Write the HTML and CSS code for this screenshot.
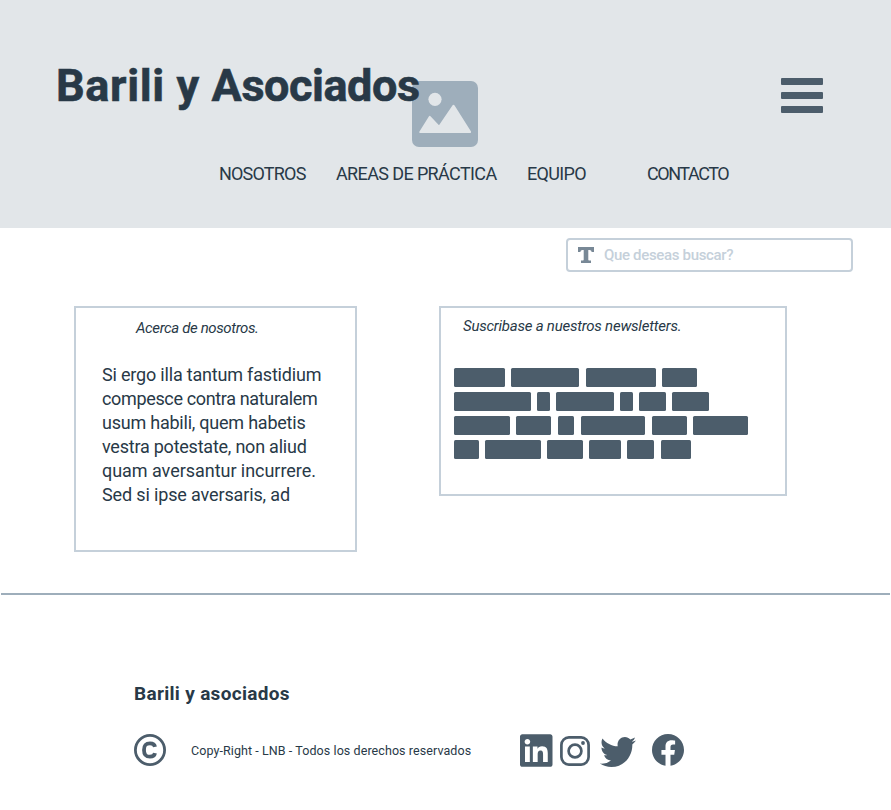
FILE: index.html
```html
<!DOCTYPE html>
<html lang="es">
<head>
<meta charset="utf-8">
<title>Barili y Asociados</title>
<link rel="stylesheet" href="styles.css">
</head>
<body>
<header class="header">
  <div class="brand-row">
    <h1 class="brand"><span class="brand-first">Barili y </span><span class="brand-last">Asociados</span></h1>
    <svg class="picture" viewBox="0 0 66 66">
      <rect width="66" height="66" rx="7" fill="#9eaebb"/>
      <circle cx="23" cy="18.300" r="6.600" fill="#e2e6e9"/>
      <path d="M7.300 50.800 17 35.200q.7-1 1.500 0L27 44.200 40.400 24.500q1.100-1.400 2.200 0L59 50.600q.5 1.500-1 1.500H8.300q-1.500 0-1-1.300z" fill="#e2e6e9"/>
    </svg>
    <div class="menu"><span></span><span></span><span></span></div>
  </div>
  <nav class="nav">
    <a class="n1">NOSOTROS</a><a class="n2">AREAS DE PRÁCTICA</a><a class="n3">EQUIPO</a><a class="n4">CONTACTO</a>
  </nav>
</header>
<div class="search">
  <svg class="search-icon" viewBox="0 0 16 16"><path d="M0 0h16v5h-2.300q-.2-2-2.200-2h-1.200v9.800q0 .7.7.7h2V16H3v-2.500h2q.7 0 .7-.7V3H4.500q-2 0-2.200 2H0z" fill="#788896"/></svg>
  <span class="search-text">Que deseas buscar?</span>
</div>
<main class="cards">
  <section class="card about">
    <h2 class="card-title about-title">Acerca de nosotros.</h2>
    <p class="copy"><span class="l1">Si ergo illa tantum fastidium</span><br><span class="l2">compesce contra naturalem</span><br><span class="l3">usum habili, quem habetis</span><br><span class="l4">vestra potestate, non aliud</span><br><span class="l5">quam aversantur incurrere.</span><br><span class="l6">Sed si ipse aversaris, ad</span></p>
  </section>
  <section class="card news">
    <h2 class="card-title news-title">Suscribase a nuestros newsletters.</h2>
    <div class="blocks">
      <div class="block-row"><i style="width:51px"></i><i style="width:68px"></i><i style="width:70.3px"></i><i style="width:34.500px"></i></div>
      <div class="block-row"><i style="width:76.500px"></i><i style="width:13px"></i><i style="width:57.700px"></i><i style="width:12.800px"></i><i style="width:27px"></i><i style="width:37px"></i></div>
      <div class="block-row"><i style="width:56px"></i><i style="width:35px"></i><i style="width:16.700px"></i><i style="width:64.700px"></i><i style="width:35px"></i><i style="width:55.500px"></i></div>
      <div class="block-row"><i style="width:24.700px"></i><i style="width:55.800px"></i><i style="width:36px"></i><i style="width:31.800px"></i><i style="width:26.800px"></i><i style="width:30.600px"></i></div>
    </div>
  </section>
</main>
<footer class="footer">
  <h3 class="footer-title">Barili y asociados</h3>
  <div class="footer-row">
    <svg class="copyright" viewBox="0 0 32 32" fill="none" stroke="#4c5d6b"><circle cx="16" cy="16" r="14.600" stroke-width="2.800"/><path d="M21 12.800C20.600 10.600 19 9.300 16 9.300C12 9.300 10 11 10 16S12 22.700 16 22.700C19 22.700 20.600 21.400 21 19.200" stroke-width="3.800"/></svg>
    <span class="legal">Copy-Right - LNB - Todos los derechos reservados</span>
    <div class="social">
      <svg class="linkedin" viewBox="0 32 448 448"><path d="M416 32H31.900C14.300 32 0 46.500 0 64.300v383.400C0 465.500 14.300 480 31.900 480H416c17.600 0 32-14.500 32-32.300V64.300c0-17.800-14.400-32.300-32-32.300zM135.400 416H69V202.200h66.500V416zm-33.200-243c-21.300 0-38.500-17.300-38.500-38.500S80.900 96 102.200 96c21.200 0 38.500 17.300 38.500 38.500 0 21.300-17.200 38.500-38.500 38.500zm282.100 243h-66.400V312c0-24.800-.5-56.700-34.500-56.700-34.600 0-39.900 27-39.900 54.900V416h-66.400V202.200h63.700v29.200h.9c8.900-16.800 30.600-34.500 62.200-34.500 66.500 0 78.800 43.800 78.800 100.900V416z"/></svg>
      <svg class="instagram" viewBox="0 0 30 30"><rect x="1.400" y="1.400" width="27.200" height="27.200" rx="7.500" fill="none" stroke="#4c5d6b" stroke-width="2.700"/><circle cx="15" cy="15" r="6.400" fill="none" stroke="#4c5d6b" stroke-width="2.700"/><circle cx="23" cy="7" r="1.900"/></svg>
      <svg class="twitter" viewBox="0 48 512 416" preserveAspectRatio="none"><path d="M459.370 151.716c.325 4.548.325 9.097.325 13.645 0 138.720-105.583 298.558-298.558 298.558-59.452 0-114.680-17.219-161.137-47.106 8.447.974 16.568 1.299 25.340 1.299 49.055 0 94.213-16.568 130.274-44.832-46.132-.975-84.792-31.188-98.112-72.772 6.498.974 12.995 1.624 19.818 1.624 9.421 0 18.843-1.300 27.614-3.573-48.081-9.747-84.143-51.980-84.143-102.985v-1.299c13.969 7.797 30.214 12.670 47.431 13.319-28.264-18.843-46.781-51.005-46.781-87.391 0-19.492 5.197-37.360 14.294-52.954 51.655 63.675 129.300 105.258 216.365 109.807-1.624-7.797-2.599-15.918-2.599-24.040 0-57.828 46.782-104.934 104.934-104.934 30.213 0 57.502 12.670 76.670 33.137 23.715-4.548 46.456-13.320 66.599-25.340-7.798 24.366-24.366 44.833-46.132 57.827 21.117-2.273 41.584-8.122 60.426-16.243-14.292 20.791-32.161 39.308-52.628 54.253z"/></svg>
      <svg class="facebook" viewBox="8 8 496 496"><path d="M504 256C504 119 393 8 256 8S8 119 8 256c0 123.780 90.690 226.380 209.250 245V327.690h-63V256h63v-54.640c0-62.150 37-96.480 93.670-96.480 27.140 0 55.520 4.840 55.520 4.840v61h-31.280c-30.800 0-40.410 19.120-40.410 38.730V256h68.780l-11 71.690h-57.780V501C413.310 482.380 504 379.780 504 256z"/></svg>
    </div>
  </div>
</footer>
</body>
</html>
```
FILE: styles.css
```css
* { box-sizing: border-box; }
body { margin: 0; background: #fff; color: #283947; font-family: Roboto, sans-serif; }
h1, h2, h3, p { margin: 0; }
svg { display: block; flex: none; }
.header { height: 228px; background: #e2e6e9; padding-top: 60px; }
.brand-row { display: flex; align-items: flex-start; height: 102px; padding-left: 56px; }
.brand { width: 370px; margin-right: -14px; font-size: 45px; line-height: 52px; font-weight: 700; white-space: nowrap; position: relative; z-index: 1; -webkit-text-stroke: 0.6px #283947; }
.brand-first { letter-spacing: 0.620px; }
.brand-last { letter-spacing: -0.450px; }
.picture { width: 66px; height: 66px; margin-top: 21px; }
.menu { display: flex; flex-direction: column; gap: 7px; margin: 17.500px 0 0 303px; }
.menu span { width: 41.500px; height: 7px; border-radius: 1px; background: #4c5d6b; }
.nav { display: flex; padding-left: 219px; font-size: 18px; line-height: 24px; font-weight: 450; white-space: nowrap; }
.n1 { width: 117px; letter-spacing: -0.800px; }
.n2 { width: 191px; letter-spacing: -0.620px; }
.n3 { width: 120px; letter-spacing: -0.680px; }
.n4 { letter-spacing: -1.450px; }
.search { display: flex; align-items: center; width: 287px; height: 34px; margin: 10px 0 0 566px; padding-left: 10px; border: 2px solid #c5d0da; border-radius: 4px; }
.search-icon { width: 16px; height: 16px; }
.search-text { margin-left: 10px; font-size: 15px; line-height: 20px; font-weight: 500; letter-spacing: -0.330px; color: #c5d0da; }
.cards { display: flex; align-items: flex-start; gap: 82px; height: 321px; padding: 34px 0 0 74px; }
.card { border: 2px solid #c5d0da; }
.about { width: 283px; height: 245.500px; padding: 10px 0 0 26px; }
.news { width: 348px; height: 189.500px; padding: 8px 0 0 13px; }
.card-title { font-size: 15px; line-height: 20px; font-weight: 450; font-style: italic; white-space: nowrap; }
.about-title { margin-left: 34px; letter-spacing: -0.380px; }
.news-title { margin-left: 9px; letter-spacing: -0.230px; }
.copy { margin-top: 25px; font-size: 18px; line-height: 24px; font-weight: 450; white-space: nowrap; }
.l1 { letter-spacing: -0.190px; }
.l2 { letter-spacing: -0.350px; }
.l3 { letter-spacing: -0.230px; }
.l4 { letter-spacing: -0.230px; }
.l5 { letter-spacing: -0.040px; }
.l6 { letter-spacing: -0.140px; }
.blocks { display: flex; flex-direction: column; gap: 5px; margin-top: 32px; }
.block-row { display: flex; gap: 6.300px; height: 19px; }
.block-row i { background: #4c5d6b; border-radius: 1.500px; }
.footer { margin: 0 1px; border-top: 2px solid #9eaebb; padding: 87px 0 0 133px; }
.footer-title { font-size: 19px; line-height: 24px; font-weight: 700; letter-spacing: 0.310px; }
.footer-row { display: flex; align-items: flex-start; margin-top: 28px; }
.copyright { width: 32px; height: 32px; }
.legal { width: 304px; margin: 9px 0 0 25px; font-size: 12.500px; line-height: 16px; font-weight: 450; letter-spacing: 0.080px; white-space: nowrap; }
.social { display: flex; margin-left: 25px; fill: #4c5d6b; }
.linkedin { width: 32.500px; height: 33px; }
.instagram { width: 30px; height: 30px; margin: 2px 0 0 7.500px; }
.twitter { width: 36px; height: 30px; margin: 3px 0 0 10px; }
.facebook { width: 32px; height: 32px; margin: 0 0 0 16px; }
```
